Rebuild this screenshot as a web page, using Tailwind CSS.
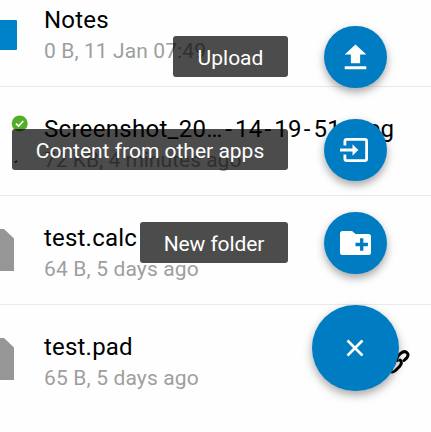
<!DOCTYPE html>
<html lang="en">
<head>
<meta charset="utf-8">
<title>Files</title>
<script src="https://cdn.jsdelivr.net/npm/@tailwindcss/browser@4"></script>
</head>
<body class="bg-[#fefefe] font-[Roboto,sans-serif]">
<div class="relative w-[431px] h-[432px] overflow-hidden bg-[#fefefe]">
  <ul>
    <li class="flex h-[87px] border-b border-[#e9e9e9]">
      <div class="w-11 shrink-0 pt-5"><div class="w-[17px] h-[30px] rounded-r-[1px] bg-[#0082c9]"></div></div>
      <div class="whitespace-nowrap pt-[5px]">
        <p class="text-[24px] leading-[31px] tracking-[0.2px] text-black">Notes</p>
        <p class="text-[21px] leading-[30px] tracking-[0.1px] text-[#9e9e9e]">0 B, 11 Jan 07:49</p>
      </div>
    </li>
    <li class="flex h-[109px] border-b border-[#e9e9e9]">
      <div class="w-11 shrink-0 pl-[11px] pt-[28px]">
        <svg class="w-[17px] h-[17px]" viewBox="0 0 17 17"><circle cx="8.7" cy="8.4" r="8" fill="#55ae27"/><path d="M5 8.7l2.6 2.4L12.3 6" fill="none" stroke="#fff" stroke-width="1.7"/></svg>
        <svg class="mt-[28px] ml-[3px] w-[6px] h-[6px]" viewBox="0 0 6 6"><path d="M1 2.500L3 1" stroke="#000" stroke-width="1.5"/></svg>
      </div>
      <div class="whitespace-nowrap pt-[27px]">
        <p class="text-[24px] leading-[31px] tracking-[0.3px] text-black">Screenshot_20<span class="tracking-[3px]">…-</span>14<span class="pl-[2px] tracking-[3px]">-</span>19<span class="pl-[2px] tracking-[3px]">-</span>51.jpeg</p>
        <p class="text-[21px] leading-[30px] text-[#9e9e9e]">72 KB, 4 minutes ago</p>
      </div>
    </li>
    <li class="flex h-[109px] border-b border-[#e9e9e9]">
      <div class="w-11 shrink-0 pt-[33px]"><svg class="w-[14px] h-[42px]" viewBox="0 0 14 42"><path d="M0 0H4L14 9.5V42H0z" fill="#969696"/></svg></div>
      <div class="whitespace-nowrap pt-[27px]">
        <p class="text-[24px] leading-[31px] tracking-[0.2px] text-black">test.calc</p>
        <p class="text-[21px] leading-[30px] tracking-[0.15px] text-[#9e9e9e]">64 B, 5 days ago</p>
      </div>
    </li>
    <li class="flex h-[127px]">
      <div class="w-11 shrink-0 pt-[33px]"><svg class="w-[14px] h-[42px]" viewBox="0 0 14 42"><path d="M0 0H4L14 9.5V42H0z" fill="#969696"/></svg></div>
      <div class="grow whitespace-nowrap pt-[27px]">
        <p class="text-[24px] leading-[31px] tracking-[0.2px] text-black">test.pad</p>
        <p class="text-[21px] leading-[30px] tracking-[0.15px] text-[#9e9e9e]">65 B, 5 days ago</p>
      </div>
      <svg class="mt-[43px] mr-[21px] w-[28px] h-[28px]" viewBox="0 0 28 28" fill="none" stroke="#000" stroke-width="3" stroke-linecap="round"><path d="M15.300 12.500C14.300 10.500 15 9 17 7L19 5.200C21 3.500 23.500 3.200 25 4.800C26.500 6.400 26 8.500 24.500 10.200L22 12.500"/><path d="M18 12C20 13.500 19.800 16 17.500 18.500L13.500 22.500C11.500 24.300 9 24.500 7.500 23C6 21.500 6.500 19 8.500 17L12.500 13.500"/></svg>
    </li>
  </ul>
  <div class="absolute right-0 top-0 w-[431px] flex flex-col items-end text-[21px] leading-[41px] text-white whitespace-nowrap">
    <div class="mt-[26px] mr-[44px] h-[62px] mb-[31px] flex items-center gap-9">
      <span class="mt-[-1px] w-[115px] h-[41px] rounded-[3px] bg-black/70 pt-[2px] text-center">Upload</span>
      <span class="w-[63px] h-[62px] rounded-full bg-[#007cc2] shadow-[0_4px_9px_rgba(0,0,0,0.35)] flex items-center justify-center">
        <svg class="w-[37px] h-[35px]" viewBox="0 0 24 24" preserveAspectRatio="none" fill="#fff"><path d="M9 16h6v-6h4l-7-7-7 7h4zm-4 2h14v2H5z"/></svg>
      </span>
    </div>
    <div class="mr-[44px] h-[62px] mb-[31px] flex items-center gap-9">
      <span class="mt-[-1px] w-[276px] h-[41px] rounded-[3px] bg-black/70 pt-[2px] text-center">Content from other apps</span>
      <span class="w-[63px] h-[62px] rounded-full bg-[#007cc2] shadow-[0_4px_9px_rgba(0,0,0,0.35)] flex items-center justify-center">
        <svg class="mr-[3px] w-[28px] h-[24px]" viewBox="0 0 28 24" fill="none" stroke="#fff" stroke-width="2.800"><path d="M4.900 7.500V3.200Q4.900 1.400 6.700 1.400H24.800Q26.600 1.400 26.600 3.200V20.800Q26.600 22.600 24.800 22.600H6.700Q4.900 22.600 4.900 20.800V16.500M0 12H13"/><path d="M12.500 6.300L18.300 12L12.500 17.700z" fill="#fff" stroke="none"/></svg>
      </span>
    </div>
    <div class="mr-[44px] h-[62px] mb-[31px] flex items-center gap-9">
      <span class="mt-[-1px] w-[148px] h-[41px] rounded-[3px] bg-black/70 pt-[2px] text-center tracking-[-0.1px]">New folder</span>
      <span class="w-[63px] h-[62px] rounded-full bg-[#007cc2] shadow-[0_4px_9px_rgba(0,0,0,0.35)] flex items-center justify-center">
        <svg class="w-[31px] h-[24px]" viewBox="0 0 31 24"><path d="M2.500 0H12L15.500 3H28.500Q31 3 31 5.500V21.500Q31 24 28.500 24H2.500Q0 24 0 21.500V2.500Q0 0 2.500 0z" fill="#fff"/><path d="M21.700 7.300V19.700M15.500 13.500H27.900" stroke="#007cc2" stroke-width="3.300"/></svg>
      </span>
    </div>
    <div class="mr-[32px] w-[87px] h-[86px] rounded-full bg-[#007cc2] shadow-[0_4px_10px_rgba(0,0,0,0.35)] flex items-center justify-center">
      <svg class="mr-[2px] w-[18px] h-[18px]" viewBox="0 0 18 18"><path d="M1.500 1.500l15 15M16.500 1.500l-15 15" stroke="#fff" stroke-width="2.600"/></svg>
    </div>
  </div>
</div>
</body>
</html>
